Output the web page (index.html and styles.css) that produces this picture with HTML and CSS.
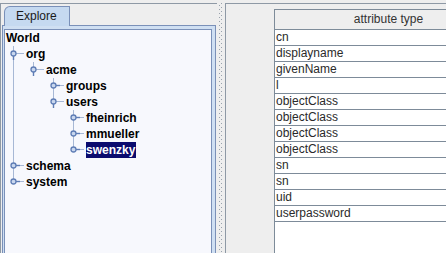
FILE: index.html
```html
<!DOCTYPE html>
<html lang="en">
<head>
  <meta charset="UTF-8">
  <title>Directory Explorer</title>
  <link rel="stylesheet" href="styles.css">
</head>
<body>

  <div class="app">
    <section class="left">
      <div class="tabs">
        <div class="tab">Explore</div>
      </div>
      <div class="tab-body">
        <div class="tree">
          <div class="node"><span class="label">World</span></div>

          <div class="node">
            <svg class="twig" width="20" height="16">
              <path class="leg" d="M7.5 0V5M7.5 10V16M10 7.5H18"/>
              <path class="stem" d="M7.5 10V14"/>
              <circle class="knob" cx="7.5" cy="7.5" r="2.5"/>
            </svg>
            <span class="label">org</span>
          </div>

          <div class="node">
            <svg class="twig" width="40" height="16">
              <path class="leg" d="M7.5 0V16M27.5 0V5M30 7.5H38"/>
              <path class="stem" d="M27.5 10V14"/>
              <circle class="knob" cx="27.5" cy="7.5" r="2.5"/>
            </svg>
            <span class="label">acme</span>
          </div>

          <div class="node">
            <svg class="twig" width="60" height="16">
              <path class="leg" d="M7.5 0V16M47.5 0V5M47.5 10V16M50 7.5H58"/>
              <path class="stem" d="M50 7.5H54"/>
              <circle class="knob" cx="47.5" cy="7.5" r="2.5"/>
            </svg>
            <span class="label">groups</span>
          </div>

          <div class="node">
            <svg class="twig" width="60" height="16">
              <path class="leg" d="M7.5 0V16M47.5 0V5M50 7.5H58"/>
              <path class="stem" d="M47.5 10V14"/>
              <circle class="knob" cx="47.5" cy="7.5" r="2.5"/>
            </svg>
            <span class="label">users</span>
          </div>

          <div class="node">
            <svg class="twig" width="80" height="16">
              <path class="leg" d="M7.5 0V16M67.5 0V5M67.5 10V16M70 7.5H78"/>
              <path class="stem" d="M70 7.5H74"/>
              <circle class="knob" cx="67.5" cy="7.5" r="2.5"/>
            </svg>
            <span class="label">fheinrich</span>
          </div>

          <div class="node">
            <svg class="twig" width="80" height="16">
              <path class="leg" d="M7.5 0V16M67.5 0V5M67.5 10V16M70 7.5H78"/>
              <path class="stem" d="M70 7.5H74"/>
              <circle class="knob" cx="67.5" cy="7.5" r="2.5"/>
            </svg>
            <span class="label">mmueller</span>
          </div>

          <div class="node">
            <svg class="twig" width="80" height="16">
              <path class="leg" d="M7.5 0V16M67.5 0V5M70 7.5H78"/>
              <path class="stem" d="M70 7.5H74"/>
              <circle class="knob" cx="67.5" cy="7.5" r="2.5"/>
            </svg>
            <span class="label selected">swenzky</span>
          </div>

          <div class="node">
            <svg class="twig" width="20" height="16">
              <path class="leg" d="M7.5 0V5M7.5 10V16M10 7.5H18"/>
              <path class="stem" d="M10 7.5H14"/>
              <circle class="knob" cx="7.5" cy="7.5" r="2.5"/>
            </svg>
            <span class="label">schema</span>
          </div>

          <div class="node">
            <svg class="twig" width="20" height="16">
              <path class="leg" d="M7.5 0V5M10 7.5H18"/>
              <path class="stem" d="M10 7.5H14"/>
              <circle class="knob" cx="7.5" cy="7.5" r="2.5"/>
            </svg>
            <span class="label">system</span>
          </div>
        </div>
      </div>
    </section>

    <div class="splitter"></div>

    <section class="right">
      <div class="grid">
        <table class="attrs">
          <thead>
            <tr><th>attribute type</th></tr>
          </thead>
          <tbody>
            <tr><td>cn</td></tr>
            <tr><td>displayname</td></tr>
            <tr><td>givenName</td></tr>
            <tr><td>l</td></tr>
            <tr><td>objectClass</td></tr>
            <tr><td>objectClass</td></tr>
            <tr><td>objectClass</td></tr>
            <tr><td>objectClass</td></tr>
            <tr><td>sn</td></tr>
            <tr><td>sn</td></tr>
            <tr><td>uid</td></tr>
            <tr><td>userpassword</td></tr>
          </tbody>
        </table>
      </div>
    </section>
  </div>

</body>
</html>
```

FILE: styles.css
```css
body {
  margin: 0;
  background-color: #eeeeee;
  font-family: 'Liberation Sans', Arial, sans-serif;
  font-size: 12px;
  color: #000;
}

.app {
  display: flex;
  height: 253px;
  padding-top: 3px;
  box-sizing: border-box;
  overflow: hidden;
}

/* left side: tabbed tree */
.left {
  width: 217px;
  flex: none;
  box-sizing: border-box;
  border-top: 1px solid #8e99a5;
  border-left: 1px solid #8e99a5;
  display: flex;
  flex-direction: column;
}

.tabs {
  display: flex;
  padding: 2px 0 0 3px;
}

.tab {
  position: relative;
  z-index: 1;
  width: 66px;
  height: 20px;
  box-sizing: border-box;
  margin-bottom: -1px;
  padding-left: 11px;
  border: 1px solid #7a90b8;
  border-bottom: none;
  border-top-left-radius: 6px;
  background-color: #c5d9f0;
  line-height: 18px;
  color: #1a1a1a;
}

.tab-body {
  flex: 1;
  width: 214px;
  margin-left: 1px;
  box-sizing: border-box;
  padding: 3px 3px 0 1px;
  border: 1px solid #7a90b8;
  border-bottom: none;
  background-color: #cfdff2;
  display: flex;
}

.tree {
  flex: 1;
  padding-left: 1px;
  border: 1px solid #7a90b8;
  border-bottom: none;
  background-color: #f7f8fd;
}

.node {
  display: flex;
  align-items: center;
  height: 16px;
}

.twig {
  display: block;
  flex: none;
}

.twig .leg {
  stroke: #a7b8d5;
  stroke-width: 1;
  fill: none;
}

.twig .stem {
  stroke: #5f7db5;
  stroke-width: 1.4;
  fill: none;
}

.twig .knob {
  stroke: #5f7db5;
  stroke-width: 1.3;
  fill: #c9d7ee;
}

.label {
  font-weight: bold;
  line-height: 16px;
  padding-right: 1px;
  white-space: nowrap;
}

.label.selected {
  background-color: #0b0b6e;
  color: #fff;
}

/* split pane divider */
.splitter {
  width: 8px;
  flex: none;
  box-sizing: border-box;
  padding: 0 2px;
  background-image:
    conic-gradient(at 1px 1px, transparent 75%, #98a1ac 0),
    conic-gradient(at 1px 1px, transparent 75%, #98a1ac 0);
  background-size: 4px 4px;
  background-position: 2px 0, 4px 2px;
  background-origin: content-box;
  background-clip: content-box;
}

/* right side: attribute table */
.right {
  flex: 1;
  min-width: 0;
  overflow: hidden;
  display: flex;
  padding: 5px 0 0 48px;
  border-top: 1px solid #8e99a5;
  border-left: 1px solid #8e99a5;
}

.grid {
  width: 228px;
  flex: none;
  box-sizing: border-box;
  border-top: 1px solid #7d8b99;
  border-left: 1px solid #7d8b99;
  background-color: #fff;
}

.attrs {
  width: 100%;
  border-collapse: separate;
  border-spacing: 0;
}

.attrs th {
  padding: 0;
  line-height: 19px;
  font-weight: normal;
  text-align: center;
  color: #333;
  background-color: #eeeeee;
  border-bottom: 1px solid #7d8b99;
}

.attrs td {
  padding: 0 0 0 1px;
  line-height: 15px;
  color: #2a2a2a;
  border-bottom: 1px solid #7d8b99;
  white-space: nowrap;
}
```
